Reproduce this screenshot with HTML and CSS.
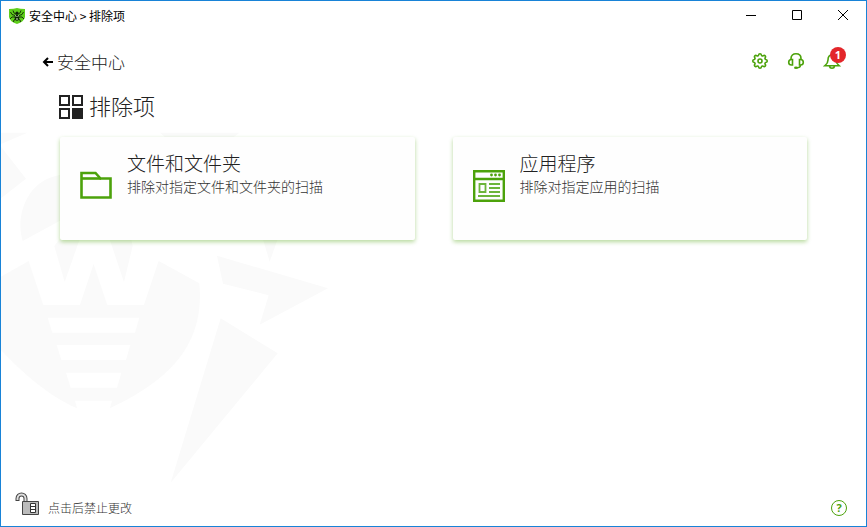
FILE: index.html
```html
<!DOCTYPE html>
<html lang="zh-CN">
<head>
  <meta charset="UTF-8">
  <title>安全中心 &gt; 排除项</title>
  <link rel="stylesheet" href="styles.css">
</head>
<body>
  <div class="window">
    <svg class="watermark" viewBox="3 3 1020 1140" aria-hidden="true">
      <path d="M3 38H82L3 72ZM3 80L78 176L3 235ZM480 38H718L690 60H505ZM68 363C45 290 80 180 180 165V302ZM163 378L180 355H240L194 486ZM328 355H393L398 378L372 486ZM788 355H834L809 425Z"/>
      <path fill-rule="evenodd" d="M3 470L86 423L130 555H240L281 432L322 555H432L476 423L598 490C612 645 545 765 330 865L336 842H225L231 865C140 825 60 750 3 690ZM143 593H418L405 638H157ZM170 675H391L378 720H184ZM198 758H364L351 803H212Z"/>
      <path d="M651 407L984 505L779 614L806 526L669 491ZM662 595L833 700L512 1088Z"/>
    </svg>

    <header class="titlebar">
      <svg class="logo" viewBox="0 0 16 16" aria-hidden="true">
        <path fill="#5fce1c" d="M0 1Q5 1 8 0Q11 1 16 1V9Q15 14 8 16Q1 14 0 9Z"/>
        <path fill="none" stroke="#0d2206" stroke-width="0.9" d="M7 6L5 5L4 2.500M9 6L11 5L12 2.500M6 7.500L3 6.500L1.500 4M10 7.500L13 6.500L14.500 4M6 9H3L1 11M10 9H13L15 11M6.500 11L5 12L4.500 14M9.500 11L11 12L11.500 14"/>
        <ellipse cx="8" cy="9.500" rx="2.300" ry="3.200" fill="#0d2206"/>
        <circle cx="8" cy="5" r="1.600" fill="#0d2206"/>
        <path stroke="#d9f5c6" d="M6 7.500L7.500 8.500M10 7.500L8.500 8.500M7 11H9"/>
      </svg>
      <span class="title">安全中心 &gt; 排除项</span>
      <div class="controls">
        <button type="button" aria-label="最小化"><svg viewBox="0 0 12 12"><path d="M1 5.500H11"/></svg></button>
        <button type="button" aria-label="最大化"><svg viewBox="0 0 12 12"><path d="M1.500 0.500H10.500V9.500H1.500Z"/></svg></button>
        <button type="button" aria-label="关闭"><svg viewBox="0 0 12 12"><path d="M1 0L11 10M11 0L1 10"/></svg></button>
      </div>
    </header>

    <nav class="topbar">
      <a class="back" href="#">
        <svg viewBox="0 0 12 12" aria-hidden="true"><path d="M12 7H3M7 3L3 7L7 11"/></svg>
        安全中心
      </a>
      <div class="tools">
        <button type="button" aria-label="设置">
          <svg viewBox="0 0 18 18">
            <path d="M7.500 3.300C7.800 1.200 10.200 1.200 10.500 3.300C10.800 4 11.500 4.200 12 3.900C13.800 2.700 15.300 4.200 14.100 6C13.800 6.500 14 7.200 14.700 7.500C16.800 7.800 16.800 10.200 14.700 10.500C14 10.800 13.800 11.500 14.100 12C15.300 13.800 13.800 15.300 12 14.100C11.500 13.800 10.800 14 10.500 14.700C10.200 16.800 7.800 16.800 7.500 14.700C7.200 14 6.500 13.800 6 14.100C4.200 15.300 2.700 13.800 3.900 12C4.200 11.500 4 10.800 3.300 10.500C1.200 10.200 1.200 7.800 3.300 7.500C4 7.200 4.200 6.500 3.900 6C2.700 4.200 4.200 2.700 6 3.900C6.500 4.200 7.200 4 7.500 3.300Z"/>
            <circle cx="9" cy="9" r="2"/>
          </svg>
        </button>
        <button type="button" aria-label="支持">
          <svg viewBox="0 0 18 18">
            <path d="M4 7.500V6.500C4 3.500 6 1.800 9 1.800S14 3.500 14 6.500V7.500M5.500 7.500V13H4.500C2.500 13 1.700 12 1.700 10.300S2.500 7.500 4.500 7.500ZM12.500 7.500V13H13.500C15.500 13 16.300 12 16.300 10.300S15.500 7.500 13.500 7.500ZM13.500 13C13.500 15 12 15.800 9.500 15.800"/>
            <ellipse class="solid" cx="9" cy="15.800" rx="2" ry="1.200"/>
          </svg>
        </button>
        <button class="bell" type="button" aria-label="通知">
          <svg viewBox="0 0 18 18">
            <path d="M9 3C6 3 5 5 5 8C5 10.500 4 12 2 13.700H16C14 12 13 10.500 13 8C13 5 12 3 9 3ZM6.500 14.500C7 16.800 11 16.800 11.500 14.500"/>
          </svg>
          <span class="badge">1</span>
        </button>
      </div>
    </nav>

    <main>
      <h1>
        <svg viewBox="0 0 24 24" aria-hidden="true">
          <path d="M1 1H10V10H1ZM14 1H23V10H14ZM1 14H10V23H1Z" fill="none" stroke="#222" stroke-width="2"/>
          <path d="M13 13H24V24H13Z" fill="#222"/>
        </svg>
        排除项
      </h1>
      <div class="cards">
        <a class="card" href="#">
          <svg viewBox="0 0 32 32" aria-hidden="true">
            <path d="M1.500 27V3H15.500L20.500 8.500H30.500V27.500H1.500Z" fill="none" stroke="#4ca20b" stroke-width="2.600"/>
            <path d="M2 8.500H21" stroke="#4ca20b" stroke-width="2.600"/>
          </svg>
          <div>
            <h2>文件和文件夹</h2>
            <p>排除对指定文件和文件夹的扫描</p>
          </div>
        </a>
        <a class="card" href="#">
          <svg viewBox="0 0 32 32" aria-hidden="true">
            <path d="M1.200 1.200H30.800V30.800H1.200ZM1 9H31" fill="none" stroke="#4ca20b" stroke-width="2.400"/>
            <path d="M6.500 14H12.500V22H6.500ZM16 14H27M16 18H27M16 22H27M5 26H27" fill="none" stroke="#6cb53a" stroke-width="1.800"/>
            <g fill="#4ca20b"><circle cx="18.500" cy="5" r="1.400"/><circle cx="22.500" cy="5" r="1.400"/><circle cx="26.500" cy="5" r="1.400"/></g>
          </svg>
          <div>
            <h2>应用程序</h2>
            <p>排除对指定应用的扫描</p>
          </div>
        </a>
      </div>
    </main>

    <footer>
      <button class="lock" type="button">
        <svg viewBox="0 0 24 26" aria-hidden="true">
          <path d="M2.500 9V6.500C2.500 1 10.500 1 10.500 6.500V11" fill="none" stroke="#444" stroke-width="4"/>
          <path d="M2.500 8V6.500C2.500 1 10.500 1 10.500 6.500V11" fill="none" stroke="#ddd" stroke-width="2"/>
          <path d="M7.500 9.500H23.500V22.500H7.500Z" fill="#bbb" stroke="#444"/>
          <path d="M15.500 11.500H20.500V20.500H15.500ZM15.500 14.500H20.500M15.500 17.500H20.500" fill="#fff" stroke="#333"/>
        </svg>
        点击后禁止更改
      </button>
      <button class="help" type="button" aria-label="帮助">?</button>
    </footer>
  </div>
</body>
</html>
```
FILE: styles.css
```css
* {
  box-sizing: border-box;
}

body {
  margin: 0;
  font-family: "Noto Sans CJK SC", sans-serif;
  font-weight: 300;
  color: #222;
}

button {
  padding: 0;
  border: 0;
  background: none;
  font: inherit;
  color: inherit;
  cursor: pointer;
}

a {
  color: inherit;
  text-decoration: none;
}

svg {
  display: block;
  flex: none;
}

.window {
  position: relative;
  display: flex;
  flex-direction: column;
  min-height: 100vh;
  border: 1px solid #1883d7;
  background: #fff;
}

.watermark {
  position: absolute;
  top: 120px;
  left: 0;
  width: 340px;
  height: 380px;
  fill: #fafafa;
}

.titlebar {
  display: flex;
  align-items: center;
  height: 30px;
  padding-left: 8px;
}

.logo {
  width: 16px;
  height: 16px;
}

.title {
  margin-left: 4px;
  padding-bottom: 2px;
  font-size: 12px;
  font-weight: 400;
  color: #000;
}

.controls {
  display: flex;
  height: 100%;
  margin-left: auto;
}

.controls button {
  display: grid;
  place-items: center;
  width: 46px;
}

.controls svg {
  width: 12px;
  height: 12px;
  fill: none;
  stroke: #000;
}

.topbar {
  display: flex;
  align-items: center;
  justify-content: space-between;
  height: 60px;
  padding: 0 25px 0 40px;
}

.back {
  display: flex;
  align-items: center;
  gap: 4px;
  font-size: 17px;
}

.back svg {
  width: 12px;
  height: 12px;
  fill: none;
  stroke: #000;
  stroke-width: 2;
}

.tools {
  display: flex;
  gap: 18px;
}

.tools button {
  position: relative;
}

.tools svg {
  width: 18px;
  height: 18px;
  fill: none;
  stroke: #4ca20b;
  stroke-width: 1.6;
}

.tools .solid {
  fill: #4ca20b;
  stroke: none;
}

.badge {
  position: absolute;
  top: -5px;
  right: -5px;
  width: 16px;
  height: 16px;
  border-radius: 50%;
  background: #e3262a;
  color: #fff;
  font: bold 11px/16px "Open Sans", sans-serif;
  text-align: center;
}

main {
  position: relative;
  flex: 1;
  padding: 0 59px;
}

h1 {
  display: flex;
  align-items: center;
  gap: 6px;
  margin: 0 0 18px -1px;
  font-size: 22px;
  font-weight: 300;
  line-height: 28px;
}

h1 svg {
  width: 24px;
  height: 24px;
  margin-top: 4px;
}

.cards {
  display: grid;
  grid-template-columns: 1fr 1fr;
  gap: 38px;
}

.card {
  display: flex;
  gap: 15px;
  min-height: 103px;
  padding: 13px 20px;
  border-radius: 2px;
  background: #fefefe;
  box-shadow: 0 2px 4px rgba(76, 162, 11, 0.4);
}

.card svg {
  width: 32px;
  height: 32px;
  margin-top: 20px;
}

.card h2 {
  margin: 0;
  font-size: 19px;
  font-weight: 300;
  line-height: 26px;
}

.card p {
  margin: 0;
  font-size: 14px;
  line-height: 20px;
  color: #333;
}

footer {
  position: relative;
  display: flex;
  align-items: center;
  justify-content: space-between;
  height: 36px;
  padding: 0 19px 0 14px;
}

.lock {
  display: flex;
  align-items: center;
  gap: 9px;
  font-size: 12px;
  line-height: 16px;
  color: #333;
}

.lock svg {
  width: 24px;
  height: 26px;
  margin-bottom: 6px;
}

.help {
  width: 16px;
  height: 16px;
  border: 1px solid #4ca20b;
  border-radius: 50%;
  color: #4ca20b;
  font: bold 11px/14px "Open Sans", sans-serif;
}
```
